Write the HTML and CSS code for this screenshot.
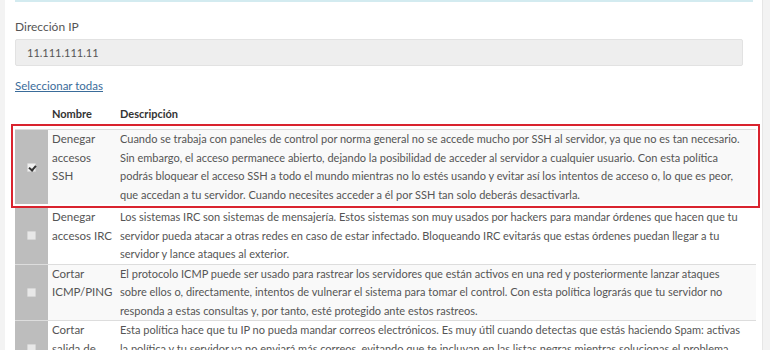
FILE: index.html
```html
<!DOCTYPE html>
<html lang="es">
<head>
    <meta charset="UTF-8" />
    <meta name="viewport" content="width=device-width, initial-scale=1.0" />
    <title>Reglas de firewall</title>
    <link rel="stylesheet" href="styles.css">
</head>
<body>
    <div class="panel">
        <div class="alert-edge"></div>

        <div class="field">
            <label class="field-label">Dirección IP</label>
            <div class="field-input">11.111.111.11</div>
        </div>

        <a href="#" class="select-all">Seleccionar todas</a>

        <div class="rules">
            <div class="rules-head">
                <div></div>
                <div class="col-name">Nombre</div>
                <div class="col-desc">Descripción</div>
            </div>

            <div class="rule striped selected">
                <div class="col-check"><span class="check checked"></span></div>
                <div class="col-name">Denegar accesos SSH</div>
                <div class="col-desc">Cuando se trabaja con paneles de control por norma general no se accede mucho por SSH al servidor, ya que no es tan necesario. Sin embargo, el acceso permanece abierto, dejando la posibilidad de acceder al servidor a cualquier usuario. Con esta política podrás bloquear el acceso SSH a todo el mundo mientras no lo estés usando y evitar así los intentos de acceso o, lo que es peor, que accedan a tu servidor. Cuando necesites acceder a él por SSH tan solo deberás desactivarla.</div>
            </div>

            <div class="rule">
                <div class="col-check"><span class="check"></span></div>
                <div class="col-name">Denegar accesos IRC</div>
                <div class="col-desc">Los sistemas IRC son sistemas de mensajería. Estos sistemas son muy usados por hackers para mandar órdenes que hacen que tu servidor pueda atacar a otras redes en caso de estar infectado. Bloqueando IRC evitarás que estas órdenes puedan llegar a tu servidor y lance ataques al exterior.</div>
            </div>

            <div class="rule striped">
                <div class="col-check"><span class="check"></span></div>
                <div class="col-name">Cortar ICMP/PING</div>
                <div class="col-desc">El protocolo ICMP puede ser usado para rastrear los servidores que están activos en una red y posteriormente lanzar ataques<br>sobre ellos o, directamente, intentos de vulnerar el sistema para tomar el control. Con esta política lograrás que tu servidor no responda a estas consultas y, por tanto, esté protegido ante estos rastreos.</div>
            </div>

            <div class="rule">
                <div class="col-check"><span class="check"></span></div>
                <div class="col-name">Cortar salida de correo</div>
                <div class="col-desc">Esta política hace que tu IP no pueda mandar correos electrónicos. Es muy útil cuando detectas que estás haciendo Spam: activas la política y tu servidor ya no enviará más correos, evitando que te incluyan en las listas negras mientras solucionas el problema.</div>
            </div>
        </div>
    </div>
</body>
</html>
```

FILE: styles.css
```css
* {
    box-sizing: border-box;
    margin: 0;
    padding: 0;
}

body {
    font-family: "Lato", "Liberation Sans", sans-serif;
    font-size: 11px;
    color: #555;
    background: #f3f3f3;
    height: 100vh;
    overflow: hidden;
}

.panel {
    margin-left: 5px;
    width: 758px;
    height: 100%;
    background: white;
    border-right: 1px solid #e6e6e6;
    padding: 0 6px 0 10px;
}

.alert-edge {
    height: 2px;
    margin-right: 3px;
    background: #d3ebf0;
}

.field {
    margin-top: 16px;
}

.field-label {
    display: block;
    font-size: 12px;
    line-height: 18px;
    margin-bottom: 3px;
}

.field-input {
    width: 728px;
    height: 27px;
    line-height: 25px;
    padding: 0 11px;
    background: #eee;
    border: 1px solid #e2e2e2;
    border-radius: 2px;
}

.select-all {
    display: inline-block;
    margin-top: 11px;
    line-height: 18px;
    color: #3a6c9a;
    font-size: 11.5px;
}

.rules {
    margin-top: 10px;
}

.rules-head,
.rule {
    display: grid;
    grid-template-columns: 33px 64px 1fr;
}

.rules-head {
    font-weight: bold;
    color: #333;
    line-height: 18px;
    padding-bottom: 2px;
}

.rules-head .col-name {
    padding-left: 4px;
}

.rules-head .col-desc {
    padding-left: 8px;
}

.rule {
    line-height: 18.5px;
    border-top: 1px solid #ddd;
}

.rule.striped {
    background: #f9f9f9;
}

.rule.selected {
    position: relative;
    margin: 4px 0 3px;
}

/* red frame drawn over the chosen rule */
.rule.selected::before {
    content: "";
    position: absolute;
    top: -6px;
    left: -4px;
    right: -4px;
    bottom: -4px;
    border: 2px solid #d9232e;
    pointer-events: none;
}

.col-check {
    background: #bdbdbd;
    display: flex;
    align-items: center;
    justify-content: center;
}

.check {
    width: 9px;
    height: 9px;
    background: #e8e8e8;
    border: 1px solid #d6d6d6;
    border-radius: 1px;
    position: relative;
}

.check.checked {
    background: #f0f0f0;
}

.check.checked::after {
    content: "";
    position: absolute;
    left: 2px;
    top: 0;
    width: 3px;
    height: 5px;
    border: solid #333;
    border-width: 0 2px 2px 0;
    transform: rotate(40deg);
}

.rule .col-name {
    padding: 0 0 0 4px;
    font-size: 11.5px;
}

.rule .col-desc {
    padding: 0 6px 0 8px;
}
```
